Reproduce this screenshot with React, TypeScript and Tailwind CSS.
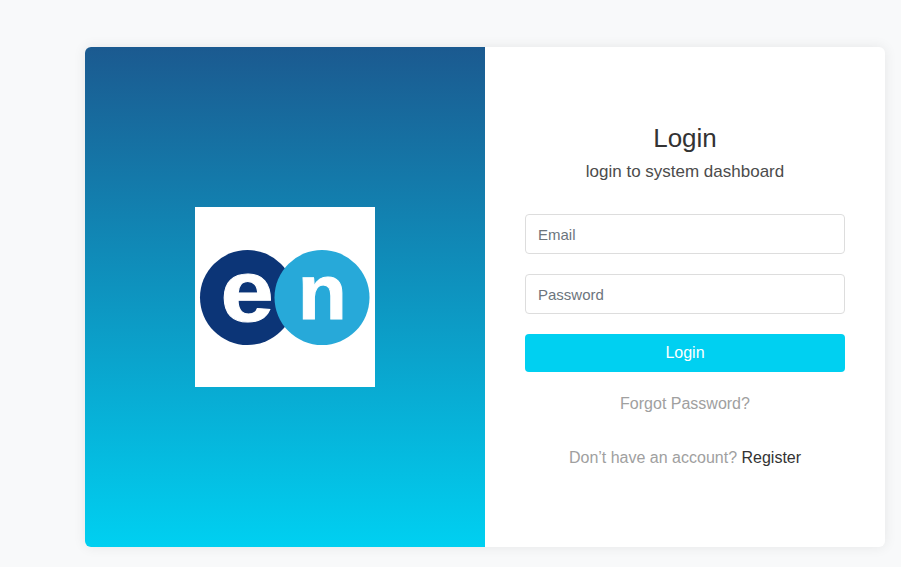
export default function App() {
  return (
    <main className="h-[567px] w-[901px] overflow-hidden bg-[#f8f9fa] pl-[85px] pt-[47px] font-['Liberation_Sans',Arial,sans-serif]">
      <div className="flex h-[500px] w-[800px] overflow-hidden rounded-md bg-white shadow-[0_0_13px_rgba(0,0,0,0.08)]">
        <section className="flex w-[400px] items-center justify-center bg-linear-to-b/srgb from-[#1b5a90] to-[#00d0f1]">
          <svg className="h-[180px] w-[180px] bg-white font-['Liberation_Sans',Arial,sans-serif] font-bold" viewBox="0 0 180 180" role="img" aria-label="en">
            <circle cx="52.5" cy="90.5" r="47.5" fill="#0c3577" />
            <circle cx="127" cy="90.5" r="47.5" fill="#27a9d9" />
            <text transform="translate(52.1 113.9) scale(1.1 1)" textAnchor="middle" fontSize="87" fill="#fff" stroke="#fff" strokeWidth="1">e</text>
            <text transform="translate(127.2 111.5) scale(1.03 1)" textAnchor="middle" fontSize="78" fill="#fff" stroke="#fff" strokeWidth="1">n</text>
          </svg>
        </section>
        <section className="flex w-[400px] flex-col px-10 pt-[76px] text-center text-base leading-6">
          <h1 className="text-[26px] leading-[31px] text-[#333333]">Login</h1>
          <p className="mt-[6px] text-[17px] text-[#4c4c4c]">login to system dashboard</p>
          <form className="mt-[30px] flex flex-col gap-5">
            <input className="h-10 rounded border border-[#dddddd] px-3 text-[15px] placeholder:text-[#6c757d]" placeholder="Email" />
            <input className="h-10 rounded border border-[#dddddd] px-3 text-[15px] placeholder:text-[#6c757d]" placeholder="Password" />
            <button type="button" className="h-[38px] rounded bg-[#00d0f1] text-white">Login</button>
          </form>
          <a className="mt-5 text-[#a0a0a0]">Forgot Password?</a>
          <p className="mt-[30px] text-[#a0a0a0]">Don’t have an account? <a className="text-[#333333]">Register</a></p>
        </section>
      </div>
    </main>
  );
}
